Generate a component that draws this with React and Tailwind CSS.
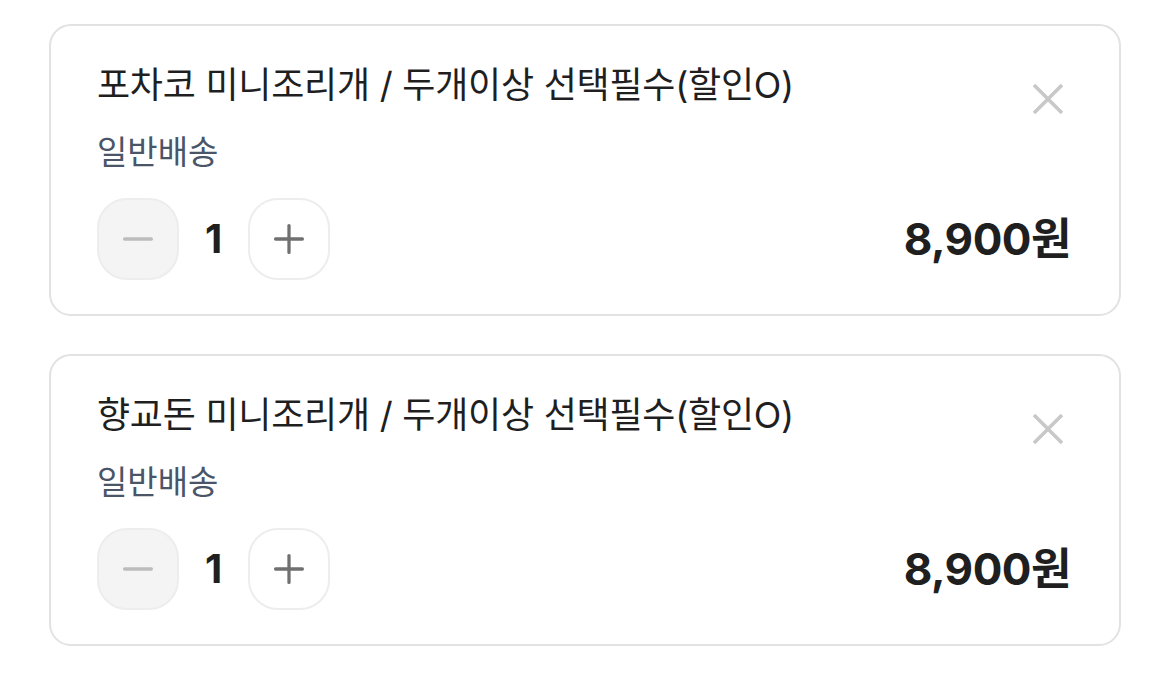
import { Minus, Plus } from "lucide-react";

const items = [
  { id: 1, name: "포차코 미니조리개 / 두개이상 선택필수(할인O)", qty: 1, price: "8,900원" },
  { id: 2, name: "향교돈 미니조리개 / 두개이상 선택필수(할인O)", qty: 1, price: "8,900원" },
];

function CartItem({ item }) {
  return (
    <div className="relative rounded-[22px] border-2 border-[#e2e2e2] bg-white pl-[46px] pr-[48px] pt-[36px] pb-[34px]">
      <div className="text-[36px] leading-[46px] tracking-[-0.25px] text-[#1f1f1f]">{item.name}</div>
      <div className="mt-[24px] text-[33px] leading-[40px] text-[#4a5568]">일반배송</div>

      <div className="mt-[26px] flex items-center justify-between">
        <div className="flex items-center">
          <button className="flex h-[82px] w-[82px] items-center justify-center rounded-[30px] border-2 border-[#ededed] bg-[#f4f4f4]">
            <Minus size={46} strokeWidth={1.7} className="text-[#bcbcbc]" />
          </button>
          <span className="w-[69px] text-center text-[40px] leading-none font-bold text-[#1f1f1f]">{item.qty}</span>
          <button className="flex h-[82px] w-[82px] items-center justify-center rounded-[30px] border-2 border-[#ededed] bg-white">
            <Plus size={46} strokeWidth={1.7} className="text-[#707070]" />
          </button>
        </div>
        <div className="text-[44px] leading-none font-bold text-[#1f1f1f] tracking-[-0.5px]">{item.price}</div>
      </div>

      <button className="absolute right-[55px] top-[57px]">
        <svg width="32" height="32" viewBox="0 0 32 32" fill="none" stroke="#c8c8c8" strokeWidth="3.6" strokeLinecap="butt">
          <path d="M2 2L30 30M30 2L2 30" />
        </svg>
      </button>
    </div>
  );
}

export default function App() {
  return (
    <div
      className="min-h-screen bg-white px-[49px] pt-[24px]"
      style={{ fontFamily: 'Inter, "Noto Sans CJK KR", "Noto Sans", sans-serif' }}
    >
      <div className="flex flex-col gap-[38px]">
        {items.map((item) => (
          <CartItem key={item.id} item={item} />
        ))}
      </div>
    </div>
  );
}
